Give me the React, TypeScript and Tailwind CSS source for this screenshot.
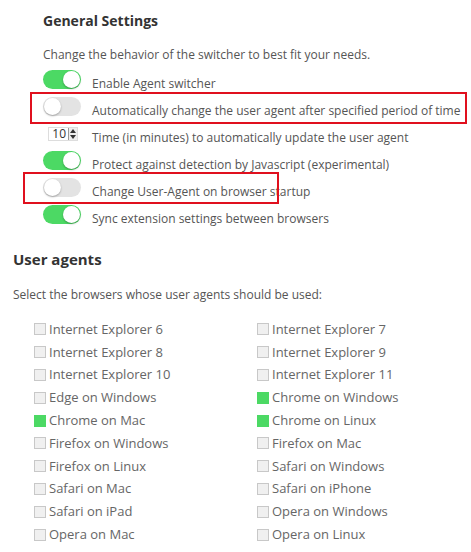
import React from "react";

const font = { fontFamily: '"Open Sans", "Noto Sans", sans-serif' };

function Toggle({ on }: { on: boolean }) {
  return (
    <div
      className={
        "relative w-[38px] h-[19px] rounded-full shrink-0 " +
        (on ? "bg-[#4cd964]" : "bg-[#e3e3e3]")
      }
    >
      <div
        className={
          "absolute top-[1px] w-[17px] h-[17px] rounded-full bg-white shadow-[0_1px_2px_rgba(0,0,0,0.3)] " +
          (on ? "right-[1px]" : "left-[1px]")
        }
      />
    </div>
  );
}

function ToggleRow({ on, label }: { on: boolean; label: string }) {
  return (
    <div className="flex items-center h-[27px]">
      <div className="w-[49px] flex">
        <Toggle on={on} />
      </div>
      <span className="text-[12px] leading-[18px] text-[#555] pt-[8px] whitespace-nowrap">{label}</span>
    </div>
  );
}

const left = [
  ["Internet Explorer 6", false],
  ["Internet Explorer 8", false],
  ["Internet Explorer 10", false],
  ["Edge on Windows", false],
  ["Chrome on Mac", true],
  ["Firefox on Windows", false],
  ["Firefox on Linux", false],
  ["Safari on Mac", false],
  ["Safari on iPad", false],
  ["Opera on Mac", false],
] as const;
const right = [
  ["Internet Explorer 7", false],
  ["Internet Explorer 9", false],
  ["Internet Explorer 11", false],
  ["Chrome on Windows", true],
  ["Chrome on Linux", true],
  ["Firefox on Mac", false],
  ["Safari on Windows", false],
  ["Safari on iPhone", false],
  ["Opera on Windows", false],
  ["Opera on Linux", false],
] as const;

function Check({ label, on }: { label: string; on: boolean }) {
  return (
    <div className="flex items-center h-[22.8px]">
      <div
        className={
          "w-[12px] h-[12px] shrink-0 mr-[3px] " +
          (on ? "bg-[#4cd964]" : "bg-[#f0f0f0] border border-[#c8c8c8]")
        }
      />
      <span className="text-[13px] text-[#666] leading-none">{label}</span>
    </div>
  );
}

export default function App() {
  return (
    <div className="w-[471px] h-[552px] bg-white relative overflow-hidden" style={font}>
      <div className="pl-[43px] pt-[10px]">
        <h2 className="text-[14px] font-bold text-[#333] h-[22px] leading-[22px]">General Settings</h2>
        <p className="text-[12px] text-[#555] mt-[14px] leading-[18px]">
          Change the behavior of the switcher to best fit your needs.
        </p>
        <div className="mt-[2px]">
          <ToggleRow on label="Enable Agent switcher" />
          <ToggleRow on={false} label="Automatically change the user agent after specified period of time" />
          <div className="flex items-center h-[27px]">
            <div className="w-[49px] flex pl-[5px]">
              <div className="flex h-[14px] border border-[#ddd] bg-white">
                <span className="text-[12px] leading-[12px] text-[#333] px-[2px] w-[19px] text-right">10</span>
                <div className="w-[9px] flex flex-col border-l border-[#999] bg-[#eee]">
                  <div className="flex-1 flex items-center justify-center">
                    <div className="w-0 h-0 border-l-[3px] border-r-[3px] border-b-[4px] border-l-transparent border-r-transparent border-b-[#333]" />
                  </div>
                  <div className="flex-1 flex items-center justify-center">
                    <div className="w-0 h-0 border-l-[3px] border-r-[3px] border-t-[4px] border-l-transparent border-r-transparent border-t-[#333]" />
                  </div>
                </div>
              </div>
            </div>
            <span className="text-[12px] leading-[18px] text-[#555] pt-[8px] whitespace-nowrap">
              Time (in minutes) to automatically update the user agent
            </span>
          </div>
          <ToggleRow on label="Protect against detection by Javascript (experimental)" />
          <ToggleRow on={false} label="Change User-Agent on browser startup" />
          <ToggleRow on label="Sync extension settings between browsers" />
        </div>
      </div>

      <div className="pl-[13px] mt-[20px]">
        <h2 className="text-[15px] font-bold text-[#333] leading-[22px]">User agents</h2>
        <p className="text-[12px] text-[#555] mt-[16px] leading-[18px]">
          Select the browsers whose user agents should be used:
        </p>
        <div className="grid grid-cols-[223px_1fr] pl-[21px] mt-[14px]">
          <div>
            {left.map(([l, on]) => (
              <Check key={l} label={l} on={on} />
            ))}
          </div>
          <div>
            {right.map(([l, on]) => (
              <Check key={l} label={l} on={on} />
            ))}
          </div>
        </div>
      </div>

      <div className="absolute left-[30px] top-[92px] w-[437px] h-[32px] border-2 border-[#e0101e] pointer-events-none" />
      <div className="absolute left-[23px] top-[172px] w-[256px] h-[32px] border-2 border-[#e0101e] pointer-events-none" />
    </div>
  );
}
